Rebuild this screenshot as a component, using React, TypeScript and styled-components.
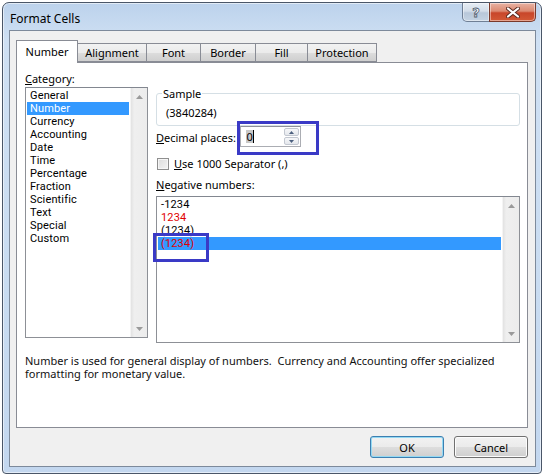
import React from "react";
import styled, { createGlobalStyle } from "styled-components";

const Global = createGlobalStyle`
  html, body { margin: 0; padding: 0; background: #ffffff; }
  body {
    font-family: "Noto Sans", "Segoe UI", "DejaVu Sans", sans-serif;
    font-size: 11px;
    color: #000;
  }
  * { box-sizing: border-box; }
`;

const Window = styled.div`
  margin: 2px 0 0 2px;
  width: 540px;
  height: 472px;
  border: 1px solid #4a5668;
  border-radius: 7px 7px 4px 4px;
  background: linear-gradient(180deg, #bcd2ec 0%, #cfe0f3 8%, #c9dcf1 60%, #c3d7ef 100%);
  box-shadow: inset 0 0 0 1px rgba(255, 255, 255, 0.55);
  padding: 0 5px 6px 6px;
  display: flex;
  flex-direction: column;
`;

const TitleBar = styled.div`
  height: 27px;
  display: flex;
  align-items: flex-start;
  justify-content: space-between;
`;

const Title = styled.div`
  margin: 8px 0 0 1px;
  font-size: 12px;
  line-height: 16px;
  color: #000;
`;

const Caption = styled.div`
  display: flex;
`;

const CaptionButton = styled.div<{ $close?: boolean }>`
  width: ${(p) => (p.$close ? 47 : 28)}px;
  height: 19px;
  display: flex;
  align-items: center;
  justify-content: center;
  border: 1px solid ${(p) => (p.$close ? "#7a3a2c" : "#6f7f95")};
  border-top: none;
  margin-left: ${(p) => (p.$close ? -1 : 0)}px;
  border-radius: ${(p) => (p.$close ? "0 0 5px 0" : "0 0 0 5px")};
  background: ${(p) =>
    p.$close
      ? "linear-gradient(180deg, #e8b2a3 0%, #dc8a72 45%, #c8462a 55%, #d35a36 100%)"
      : "linear-gradient(180deg, #e6edf5 0%, #d3dde9 45%, #b8c7d9 55%, #c5d3e3 100%)"};
  box-shadow: inset 0 0 0 1px rgba(255, 255, 255, 0.45);
`;

const HelpGlyph = styled.span`
  font-family: "DejaVu Sans", sans-serif;
  font-weight: bold;
  font-size: 13px;
  line-height: 13px;
  color: #fff;
  -webkit-text-stroke: 0.8px #4d5b6d;
`;

const Client = styled.div`
  flex: 1;
  background: #f0f0f0;
  border: 1px solid #7d8a9b;
  padding: 9px 7px 8px 6px;
  display: flex;
  flex-direction: column;
`;

const TabStrip = styled.div`
  height: 22px;
  display: flex;
  align-items: flex-end;
  position: relative;
  z-index: 1;
`;

const Tab = styled.div<{ $active?: boolean; $w: number }>`
  width: ${(p) => p.$w}px;
  height: ${(p) => (p.$active ? 23 : 19)}px;
  margin-bottom: ${(p) => (p.$active ? -1 : 0)}px;
  margin-left: -1px;
  &:first-child { margin-left: 0; }
  border: 1px solid #898c95;
  border-bottom: ${(p) => (p.$active ? "none" : "1px solid #898c95")};
  background: ${(p) =>
    p.$active ? "#ffffff" : "linear-gradient(180deg, #f2f2f2 0%, #ebebeb 50%, #dddddd 51%, #cfcfcf 100%)"};
  display: flex;
  align-items: center;
  justify-content: center;
  padding-bottom: ${(p) => (p.$active ? 2 : 0)}px;
  font-size: 11px;
  line-height: 13px;
  position: relative;
  z-index: ${(p) => (p.$active ? 2 : 1)};
`;

const Panel = styled.div`
  height: 366px;
  background: #fff;
  border: 1px solid #898c95;
  padding: 9px 7px 0 8px;
  display: flex;
  flex-direction: column;
`;

const Columns = styled.div`
  display: grid;
  grid-template-columns: 123px 364px;
  column-gap: 8px;
  align-items: start;
`;

const Column = styled.div`
  display: flex;
  flex-direction: column;
`;

const Label = styled.div<{ $mt?: number }>`
  line-height: 13px;
  margin-top: ${(p) => p.$mt ?? 0}px;
  white-space: nowrap;
`;

const Key = styled.span`
  text-decoration: underline;
  text-underline-offset: 1px;
`;

const ListBox = styled.div<{ $h: number; $mt: number }>`
  height: ${(p) => p.$h}px;
  margin-top: ${(p) => p.$mt}px;
  border: 1px solid #8d9096;
  border-top-color: #828790;
  background: #fff;
  display: flex;
  position: relative;
`;

const Items = styled.div`
  flex: 1;
  padding: 1px 1px 0 1px;
  display: flex;
  flex-direction: column;
`;

const Item = styled.div<{ $selected?: boolean; $red?: boolean }>`
  height: 13px;
  line-height: 13px;
  padding-left: 3px;
  font-family: Roboto, "Noto Sans", sans-serif;
  font-size: 11px;
  letter-spacing: 0.15px;
  white-space: nowrap;
  color: ${(p) => (p.$red ? "#e00000" : p.$selected ? "#fff" : "#000")};
  background: ${(p) => (p.$selected ? "#3399ff" : "transparent")};
`;

const ScrollBar = styled.div`
  width: 17px;
  background: linear-gradient(90deg, #e2e2e2 0%, #efefef 20%, #ececec 100%);
  border-left: 1px solid #f4f4f4;
  display: flex;
  flex-direction: column;
  justify-content: space-between;
`;

const ScrollArrow = styled.div`
  height: 17px;
  display: flex;
  align-items: center;
  justify-content: center;
`;

const Arrow = ({ up }: { up?: boolean }) => (
  <svg width="7" height="4" viewBox="0 0 7 4">
    <path d={up ? "M0 4 L3.5 0 L7 4 Z" : "M0 0 L7 0 L3.5 4 Z"} fill="#9a9a9a" />
  </svg>
);

const Group = styled.fieldset`
  margin: 15px 0 0 0;
  padding: 6px 0 6px 9px;
  border: 1px solid #d5dfe5;
  border-radius: 3px;
  min-width: 0;
`;

const Legend = styled.legend`
  padding: 0 1px;
  margin-left: -4px;
  line-height: 13px;
`;

const Value = styled.div`
  line-height: 13px;
`;

const SpinRow = styled.div`
  margin-top: 0;
  height: 21px;
  display: flex;
  align-items: center;
  position: relative;
`;

const SpinLabel = styled.div`
  width: 84px;
  line-height: 13px;
  padding-top: 1px;
  white-space: nowrap;
`;

const SpinBox = styled.div`
  width: 61px;
  height: 21px;
  border: 1px solid #abadb3;
  border-top-color: #8e9199;
  background: #fff;
  display: flex;
  align-items: center;
  padding: 0 1px 0 5px;
`;

const SpinText = styled.div`
  flex: 1;
  display: flex;
  align-items: center;
  line-height: 13px;
`;

const Selected = styled.span`
  background: #c8c8c8;
  padding: 0 0.5px;
`;

const Caret = styled.span`
  width: 1px;
  height: 13px;
  background: #000;
`;

const SpinButtons = styled.div`
  width: 15px;
  height: 17px;
  display: flex;
  flex-direction: column;
  gap: 1px;
`;

const SpinButton = styled.div`
  flex: 1;
  border: 1px solid #c2c7d0;
  border-radius: 2px;
  background: linear-gradient(180deg, #f6f7f9 0%, #e4e7ec 100%);
  display: flex;
  align-items: center;
  justify-content: center;
`;

const SpinArrow = ({ up }: { up?: boolean }) => (
  <svg width="5" height="3" viewBox="0 0 5 3">
    <path d={up ? "M0 3 L2.5 0 L5 3 Z" : "M0 0 L5 0 L2.5 3 Z"} fill="#4c607f" />
  </svg>
);

const Mark = styled.div<{ $l: number; $t: number; $w: number; $h: number }>`
  position: absolute;
  left: ${(p) => p.$l}px;
  top: ${(p) => p.$t}px;
  width: ${(p) => p.$w}px;
  height: ${(p) => p.$h}px;
  border: 3px solid #3a3ac6;
  pointer-events: none;
  z-index: 3;
`;

const CheckRow = styled.div`
  margin-top: 9px;
  height: 15px;
  display: flex;
  align-items: center;
  gap: 5px;
  padding-left: 1px;
`;

const CheckBox = styled.div`
  width: 12px;
  height: 12px;
  border: 1px solid #8f8f8f;
  background: linear-gradient(135deg, #dcdcdc 0%, #f4f4f4 100%);
  box-shadow: inset 0 0 0 1px #f6f6f6;
`;

const Description = styled.div`
  margin-top: 11px;
  line-height: 13px;
  color: #111;
  width: 480px;
`;

const ButtonRow = styled.div`
  margin-top: 8px;
  display: flex;
  justify-content: flex-end;
  gap: 10px;
`;

const Button = styled.div<{ $default?: boolean }>`
  width: 74px;
  height: 22px;
  border: 1px solid ${(p) => (p.$default ? "#3c7fb1" : "#707070")};
  border-radius: 3px;
  background: linear-gradient(180deg, #f2f2f2 0%, #ebebeb 50%, #dddddd 51%, #cfcfcf 100%);
  box-shadow: inset 0 0 0 1px ${(p) => (p.$default ? "#94d9f3" : "#fcfcfc")};
  display: flex;
  align-items: center;
  justify-content: center;
  line-height: 13px;
`;

const tabs = [
  { name: "Number", w: 62, active: true },
  { name: "Alignment", w: 70 },
  { name: "Font", w: 55 },
  { name: "Border", w: 56 },
  { name: "Fill", w: 53 },
  { name: "Protection", w: 70 },
];

const categories = [
  "General",
  "Number",
  "Currency",
  "Accounting",
  "Date",
  "Time",
  "Percentage",
  "Fraction",
  "Scientific",
  "Text",
  "Special",
  "Custom",
];

const negatives = [
  { t: "-1234" },
  { t: "1234", red: true },
  { t: "(1234)" },
  { t: "(1234)", red: true, selected: true },
];

export default function App() {
  return (
    <>
      <Global />
      <Window>
        <TitleBar>
          <Title>Format Cells</Title>
          <Caption>
            <CaptionButton>
              <HelpGlyph>?</HelpGlyph>
            </CaptionButton>
            <CaptionButton $close>
              <svg width="14" height="11" viewBox="0 0 14 11">
                <path d="M2 1.5 L12 9.5 M12 1.5 L2 9.5" stroke="#5a2a20" strokeWidth="4" strokeLinecap="round" />
                <path d="M2 1.5 L12 9.5 M12 1.5 L2 9.5" stroke="#ffffff" strokeWidth="2.2" strokeLinecap="round" />
              </svg>
            </CaptionButton>
          </Caption>
        </TitleBar>
        <Client>
          <TabStrip>
            {tabs.map((t) => (
              <Tab key={t.name} $w={t.w} $active={t.active}>
                {t.name}
              </Tab>
            ))}
          </TabStrip>
          <Panel>
            <Columns>
              <Column>
                <Label>
                  <Key>C</Key>ategory:
                </Label>
                <ListBox $h={251} $mt={2}>
                  <Items>
                    {categories.map((c) => (
                      <Item key={c} $selected={c === "Number"}>
                        {c}
                      </Item>
                    ))}
                  </Items>
                  <ScrollBar>
                    <ScrollArrow>
                      <Arrow up />
                    </ScrollArrow>
                    <ScrollArrow>
                      <Arrow />
                    </ScrollArrow>
                  </ScrollBar>
                </ListBox>
              </Column>
              <Column>
                <Group>
                  <Legend>Sample</Legend>
                  <Value>(3840284)</Value>
                </Group>
                <SpinRow>
                  <SpinLabel>
                    <Key>D</Key>ecimal places:
                  </SpinLabel>
                  <SpinBox>
                    <SpinText>
                      <Selected>0</Selected>
                      <Caret />
                    </SpinText>
                    <SpinButtons>
                      <SpinButton>
                        <SpinArrow up />
                      </SpinButton>
                      <SpinButton>
                        <SpinArrow />
                      </SpinButton>
                    </SpinButtons>
                  </SpinBox>
                  <Mark $l={81} $t={-5} $w={82} $h={34} />
                </SpinRow>
                <CheckRow>
                  <CheckBox />
                  <span>
                    <Key>U</Key>se 1000 Separator (,)
                  </span>
                </CheckRow>
                <Label $mt={7}>
                  <Key>N</Key>egative numbers:
                </Label>
                <ListBox $h={147} $mt={5}>
                  <Items>
                    {negatives.map((n, i) => (
                      <Item key={i} $red={n.red} $selected={n.selected}>
                        {n.t}
                      </Item>
                    ))}
                  </Items>
                  <ScrollBar>
                    <ScrollArrow>
                      <Arrow up />
                    </ScrollArrow>
                    <ScrollArrow>
                      <Arrow />
                    </ScrollArrow>
                  </ScrollBar>
                  <Mark $l={-4} $t={36} $w={56} $h={29} />
                </ListBox>
              </Column>
            </Columns>
            <Description>
              Number is used for general display of numbers.&nbsp; Currency and Accounting offer specialized
              formatting for monetary value.
            </Description>
          </Panel>
          <ButtonRow>
            <Button $default>OK</Button>
            <Button>Cancel</Button>
          </ButtonRow>
        </Client>
      </Window>
    </>
  );
}
